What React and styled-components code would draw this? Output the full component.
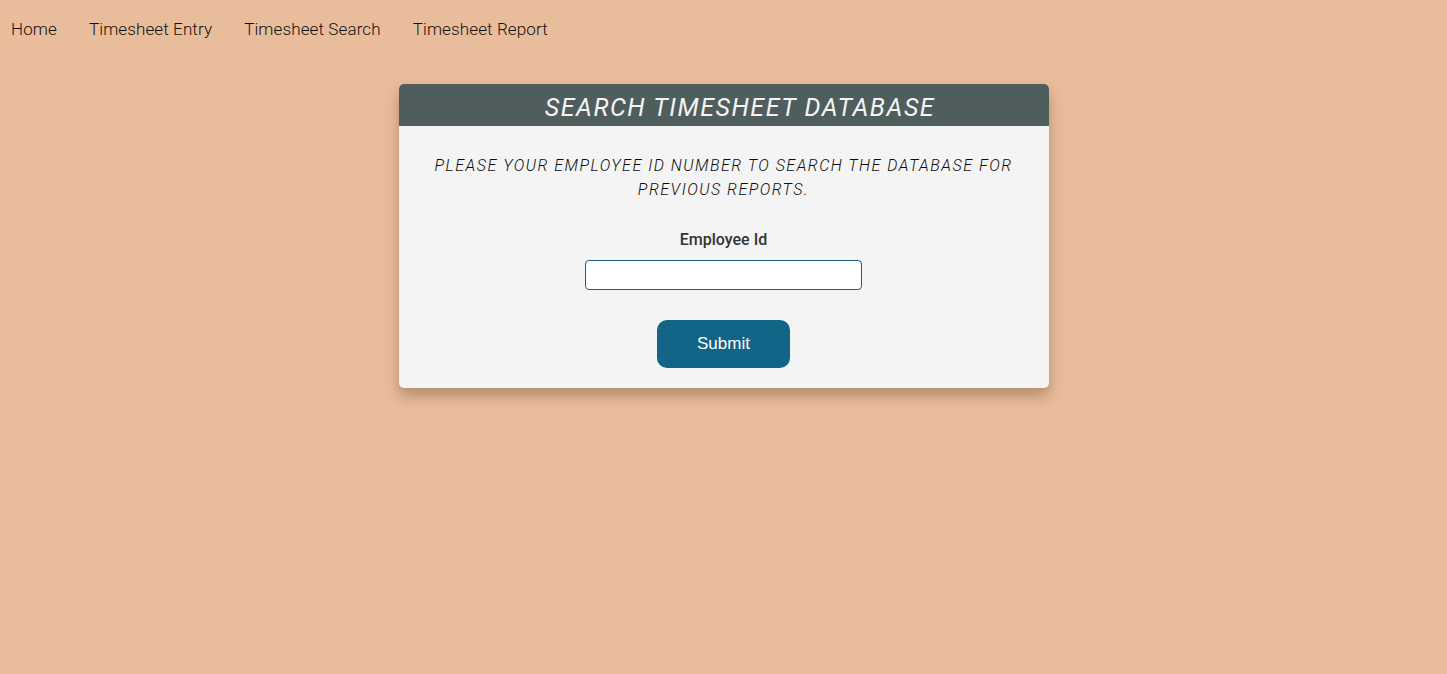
import React from "react";
import styled, { createGlobalStyle } from "styled-components";

const Global = createGlobalStyle`
  html, body { margin: 0; padding: 0; }
  body {
    background: #e9bd9b;
    font-family: Roboto, "Liberation Sans", sans-serif;
    min-height: 674px;
  }
`;

const Nav = styled.nav`
  display: flex;
  gap: 32px;
  padding: 18px 11px 0;
  height: 40px;
  box-sizing: border-box;
  align-items: center;
`;

const NavLink = styled.a`
  font-family: Roboto, sans-serif;
  font-weight: 300;
  font-size: 17px;
  letter-spacing: 0.12px;
  color: #111;
  text-decoration: none;
  cursor: pointer;
`;

const Main = styled.main`
  display: flex;
  justify-content: center;
  padding-top: 44px;
`;

const Card = styled.section`
  width: 650px;
  background: #f4f4f4;
  border-radius: 5px;
  box-shadow: 0 8px 14px rgba(80, 50, 30, 0.35);
  overflow: hidden;
`;

const CardHeader = styled.h1`
  margin: 0;
  height: 42px;
  background: #4f5e5c;
  color: #f4f4f4;
  font-family: Roboto, sans-serif;
  font-style: italic;
  font-weight: 400;
  font-size: 25px;
  letter-spacing: 1.55px;
  display: flex;
  align-items: center;
  justify-content: center;
  padding-left: 33px;
  padding-top: 5px;
  box-sizing: border-box;
`;

const CardBody = styled.form`
  display: flex;
  flex-direction: column;
  align-items: center;
  padding: 28px 30px 20px;
`;

const Intro = styled.p`
  margin: 0;
  font-family: Roboto, sans-serif;
  font-style: italic;
  font-weight: 300;
  font-size: 16px;
  line-height: 24px;
  letter-spacing: 1.5px;
  text-transform: uppercase;
  text-align: center;
  color: #0c0c0c;
`;

const Label = styled.label`
  margin-top: 28px;
  font-family: Roboto, sans-serif;
  font-weight: 500;
  font-size: 16px;
  color: #333;
  line-height: 20px;
`;

const Input = styled.input`
  margin-top: 10px;
  width: 277px;
  height: 30px;
  box-sizing: border-box;
  border: 1px solid #1a5f7f;
  border-radius: 4px;
  background: #fff;
  outline: none;
`;

const Button = styled.button`
  margin-top: 30px;
  width: 133px;
  height: 48px;
  border: none;
  border-radius: 10px;
  background: #126587;
  color: #fff;
  font-family: "Liberation Sans", Arial, sans-serif;
  font-size: 17px;
  cursor: pointer;
`;

export default function App() {
  return (
    <>
      <Global />
      <Nav>
        <NavLink>Home</NavLink>
        <NavLink>Timesheet Entry</NavLink>
        <NavLink>Timesheet Search</NavLink>
        <NavLink>Timesheet Report</NavLink>
      </Nav>
      <Main>
        <Card>
          <CardHeader>SEARCH TIMESHEET DATABASE</CardHeader>
          <CardBody onSubmit={(e) => e.preventDefault()}>
            <Intro>
              Please your employee id number to search the database for previous reports.
            </Intro>
            <Label htmlFor="emp">Employee Id</Label>
            <Input id="emp" type="text" />
            <Button type="submit">Submit</Button>
          </CardBody>
        </Card>
      </Main>
    </>
  );
}
